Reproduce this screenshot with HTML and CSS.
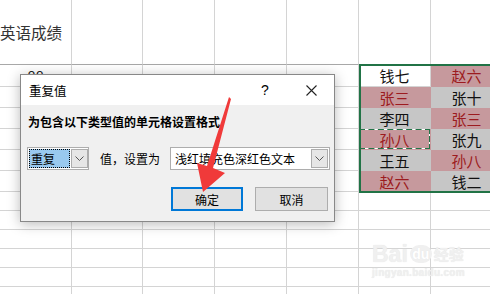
FILE: index.html
```html
<!DOCTYPE html>
<html lang="zh-CN">
<head>
    <meta charset="UTF-8">
    <title>重复值</title>
    <link rel="stylesheet" href="styles.css">
</head>
<body>

    <!-- Worksheet -->
    <table class="sheet">
        <colgroup>
            <col class="w72"><col class="w71"><col class="w72"><col class="w72"><col class="w72"><col class="w72"><col class="w72">
        </colgroup>
        <tr class="head"><td class="label">英语成绩</td><td></td><td></td><td></td><td></td><td></td><td></td></tr>
        <tr class="r21"><td class="num">88</td><td></td><td></td><td></td><td></td><td class="cell">钱七</td><td class="cell dup">赵六</td></tr>
        <tr class="r21"><td></td><td></td><td></td><td></td><td></td><td class="cell dup">张三</td><td class="cell sel">张十</td></tr>
        <tr class="r21"><td></td><td></td><td></td><td></td><td></td><td class="cell sel">李四</td><td class="cell dup">张三</td></tr>
        <tr class="r21"><td></td><td></td><td></td><td></td><td></td><td class="cell dup copy">孙八</td><td class="cell sel">张九</td></tr>
        <tr class="r21"><td></td><td></td><td></td><td></td><td></td><td class="cell sel">王五</td><td class="cell dup">孙八</td></tr>
        <tr class="r21"><td></td><td></td><td></td><td></td><td></td><td class="cell dup">赵六</td><td class="cell sel">钱二</td></tr>
        <tr class="r19"><td></td><td></td><td></td><td></td><td></td><td></td><td></td></tr>
        <tr class="r19"><td></td><td></td><td></td><td></td><td></td><td></td><td></td></tr>
        <tr class="r19"><td></td><td></td><td></td><td></td><td></td><td></td><td></td></tr>
        <tr class="r19"><td></td><td></td><td></td><td></td><td></td><td></td><td></td></tr>
        <tr class="r19"><td></td><td></td><td></td><td></td><td></td><td></td><td></td></tr>
        <tr class="r19"><td></td><td></td><td></td><td></td><td></td><td></td><td></td></tr>
    </table>

    <!-- Selection frame -->
    <div class="selection"></div>

    <!-- Duplicate values dialog -->
    <div class="dialog">
        <div class="titlebar">
            <span class="title">重复值</span>
            <span class="help">?</span>
            <span class="close">
                <svg width="11" height="11" viewBox="0 0 11 11"><path d="M0.5 0.5 L10.5 10.5 M10.5 0.5 L0.5 10.5" stroke="#222" stroke-width="1.1" fill="none"/></svg>
            </span>
        </div>
        <div class="dialog-body">
            <div class="prompt">为包含以下类型值的单元格设置格式</div>
            <div class="fields">
                <div class="select select-type">
                    <span class="value"><span class="focus">重复</span></span>
                    <span class="arrow"><svg width="9" height="5" viewBox="0 0 9 5"><path d="M0.5 0.5 L4.5 4.5 L8.5 0.5" stroke="#555" fill="none"/></svg></span>
                </div>
                <span class="mid">值，设置为</span>
                <div class="select select-format">
                    <span class="value">浅红填充色深红色文本</span>
                    <span class="arrow"><svg width="9" height="5" viewBox="0 0 9 5"><path d="M0.5 0.5 L4.5 4.5 L8.5 0.5" stroke="#555" fill="none"/></svg></span>
                </div>
            </div>
            <div class="buttons">
                <button class="btn primary">确定</button>
                <button class="btn">取消</button>
            </div>
        </div>
    </div>

    <!-- Red pointer arrow -->
    <svg class="pointer" width="490" height="294" viewBox="0 0 490 294">
        <polygon points="229,97 231,99 213,168 225,173 203,192 197,163 207,166" fill="#f03a3a"/>
    </svg>

    <!-- Watermark -->
    <div class="watermark">
        <div class="wm-logo"><span>Bai</span><span class="wm-du">du</span><span class="wm-cn">经验</span></div>
        <div class="wm-url">jingyan.baidu.com</div>
    </div>

</body>
</html>
```

FILE: styles.css
```css
* {
    margin: 0;
    padding: 0;
    box-sizing: border-box;
}

body {
    width: 490px;
    height: 294px;
    overflow: hidden;
    background: #fff;
    font-family: "Noto Sans CJK SC", "Noto Sans", sans-serif;
    position: relative;
}

/* Worksheet */
.sheet {
    border-collapse: separate;
    border-spacing: 0;
    table-layout: fixed;
    width: 503px;
}

.w72 { width: 72px; }
.w71 { width: 71px; }

.sheet td {
    border-right: 1px solid #d4d4d4;
    border-bottom: 1px solid #d4d4d4;
    padding: 0;
    overflow: hidden;
    white-space: nowrap;
}

.head { height: 65px; }
.head td { border-bottom-color: #a8a8a8; }
.r21 { height: 21px; }
.r19 { height: 19px; }

.label {
    font-size: 15.5px;
    color: #333;
    vertical-align: middle;
    padding-top: 2px;
}

.num {
    font-size: 15px;
    text-align: center;
    color: #222;
}

.cell {
    font-size: 15px;
    line-height: 19px;
    text-align: center;
    color: #111;
    position: relative;
}

.sel {
    background: #c6c6c6;
    border-right-color: #c6c6c6 !important;
    border-bottom-color: #c6c6c6 !important;
}

.dup {
    background: #c6999d;
    color: #9c1b20;
    border-right-color: #c6999d !important;
    border-bottom-color: #c6999d !important;
}

.copy::before {
    content: "";
    position: absolute;
    left: 0;
    top: -1px;
    right: -1px;
    bottom: -1px;
    border: 2px solid #fff;
}

.copy::after {
    content: "";
    position: absolute;
    left: 0;
    top: -1px;
    right: -1px;
    bottom: -1px;
    border: 2px dashed #217346;
}

.selection {
    position: absolute;
    left: 359px;
    top: 64px;
    width: 140px;
    height: 129px;
    border: 2px solid #217346;
}

/* Dialog */
.dialog {
    position: absolute;
    left: 20px;
    top: 74px;
    width: 315px;
    height: 148px;
    border: 1px solid #888;
    background: #f0f0f0;
    box-shadow: 0 2px 12px rgba(0, 0, 0, 0.28);
    font-size: 12px;
    color: #000;
}

.titlebar {
    height: 30px;
    background: #fff;
    display: flex;
    align-items: center;
}

.title {
    flex: 1;
    padding-left: 8px;
    font-size: 12.5px;
}

.help,
.close {
    width: 46px;
    height: 30px;
    display: flex;
    align-items: center;
    justify-content: center;
}

.help {
    font-family: "Liberation Sans", sans-serif;
    font-size: 14px;
}

.dialog-body {
    padding: 0 4px 0 6px;
}

.prompt {
    margin-top: 9px;
    padding-left: 1px;
    font-weight: bold;
    line-height: 16px;
}

.fields {
    margin-top: 17px;
    height: 23px;
    display: flex;
    align-items: center;
}

.select {
    flex-shrink: 0;
    height: 23px;
    border: 1px solid #adadad;
    background: #fff;
    display: flex;
    align-items: center;
    padding: 1px;
}

.select-type { width: 62px; }
.select-format { width: 160px; margin-left: 10px; }

.select .value {
    flex: 1;
    height: 19px;
    line-height: 19px;
    padding-left: 3px;
    white-space: nowrap;
}

.select-type .value { padding-left: 0; }

.focus {
    display: block;
    width: 41px;
    height: 19px;
    background: #99c9ef;
    outline: 1px dotted #000;
    outline-offset: -1px;
    padding-left: 2px;
}

.arrow {
    flex-shrink: 0;
    width: 17px;
    height: 19px;
    margin-left: 1px;
    background: #e6e6e6;
    border: 1px solid #adadad;
    display: flex;
    align-items: center;
    justify-content: center;
}

.mid {
    flex-shrink: 0;
    white-space: nowrap;
    margin-left: 11px;
}

.buttons {
    margin-top: 17px;
    padding-right: 2px;
    display: flex;
    justify-content: flex-end;
    gap: 12px;
}

.btn {
    width: 73px;
    height: 24px;
    background: #e1e1e1;
    border: 1px solid #adadad;
    font-family: inherit;
    font-size: 12px;
    color: #000;
}

.btn.primary {
    width: 72px;
    border: 2px solid #0078d7;
}

.pointer {
    position: absolute;
    left: 0;
    top: 0;
}

/* Watermark */
.watermark {
    position: absolute;
    left: 372px;
    top: 240px;
    color: #f0f0f0;
    font-family: "Liberation Sans", sans-serif;
}

.wm-logo {
    display: flex;
    align-items: center;
    font-size: 23px;
    font-weight: bold;
    line-height: 28px;
    text-shadow: 0 0 1px #e2e2e2;
}

.wm-du {
    font-size: 14px;
    width: 22px;
    height: 18px;
    border-radius: 9px;
    background: #f0f0f0;
    color: #fff;
    line-height: 18px;
    text-align: center;
    margin-left: 2px;
}

.wm-cn {
    font-family: "Noto Sans CJK SC", sans-serif;
    font-size: 15px;
    margin-left: 2px;
}

.wm-url {
    font-size: 10px;
    font-weight: bold;
    letter-spacing: 0.3px;
    margin-top: -1px;
    text-shadow: 0 0 1px #e2e2e2;
}
```
